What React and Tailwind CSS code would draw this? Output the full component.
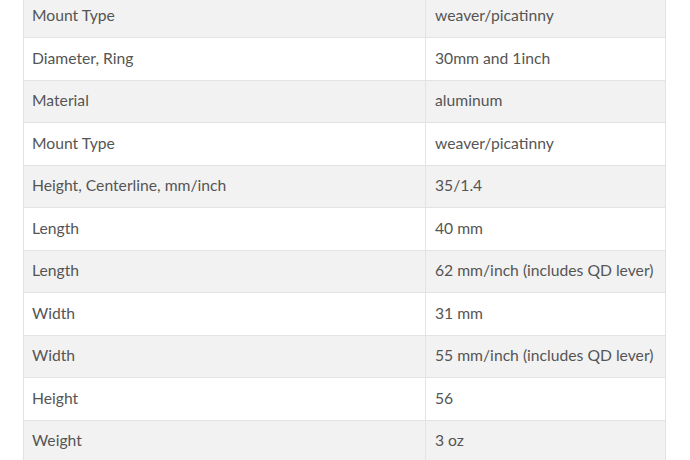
const rows = [
  ["Mount Type", "weaver/picatinny"],
  ["Diameter, Ring", "30mm and 1inch"],
  ["Material", "aluminum"],
  ["Mount Type", "weaver/picatinny"],
  ["Height, Centerline, mm/inch", "35/1.4"],
  ["Length", "40 mm"],
  ["Length", "62 mm/inch (includes QD lever)"],
  ["Width", "31 mm"],
  ["Width", "55 mm/inch (includes QD lever)"],
  ["Height", "56"],
  ["Weight", "3 oz"],
];

export default function App() {
  return (
    <div className="h-[460px] w-[690px] overflow-hidden bg-white">
      <table
        className="-mt-[5.5px] ml-[23px] w-[643px] table-fixed border-collapse text-[15.7px] text-[#555]"
        style={{ fontFamily: "Lato, 'Liberation Sans', sans-serif" }}
      >
        <tbody>
          {rows.map(([label, value], i) => (
            <tr
              key={i}
              className={`h-[42.5px] border border-[#e3e3e3] ${i % 2 === 0 ? "bg-[#f2f2f2]" : "bg-white"}`}
            >
              <td className="w-[402px] whitespace-nowrap border-r border-[#e3e3e3] px-2 align-middle">{label}</td>
              <td className="whitespace-nowrap px-[9px] align-middle">{value}</td>
            </tr>
          ))}
        </tbody>
      </table>
    </div>
  );
}
